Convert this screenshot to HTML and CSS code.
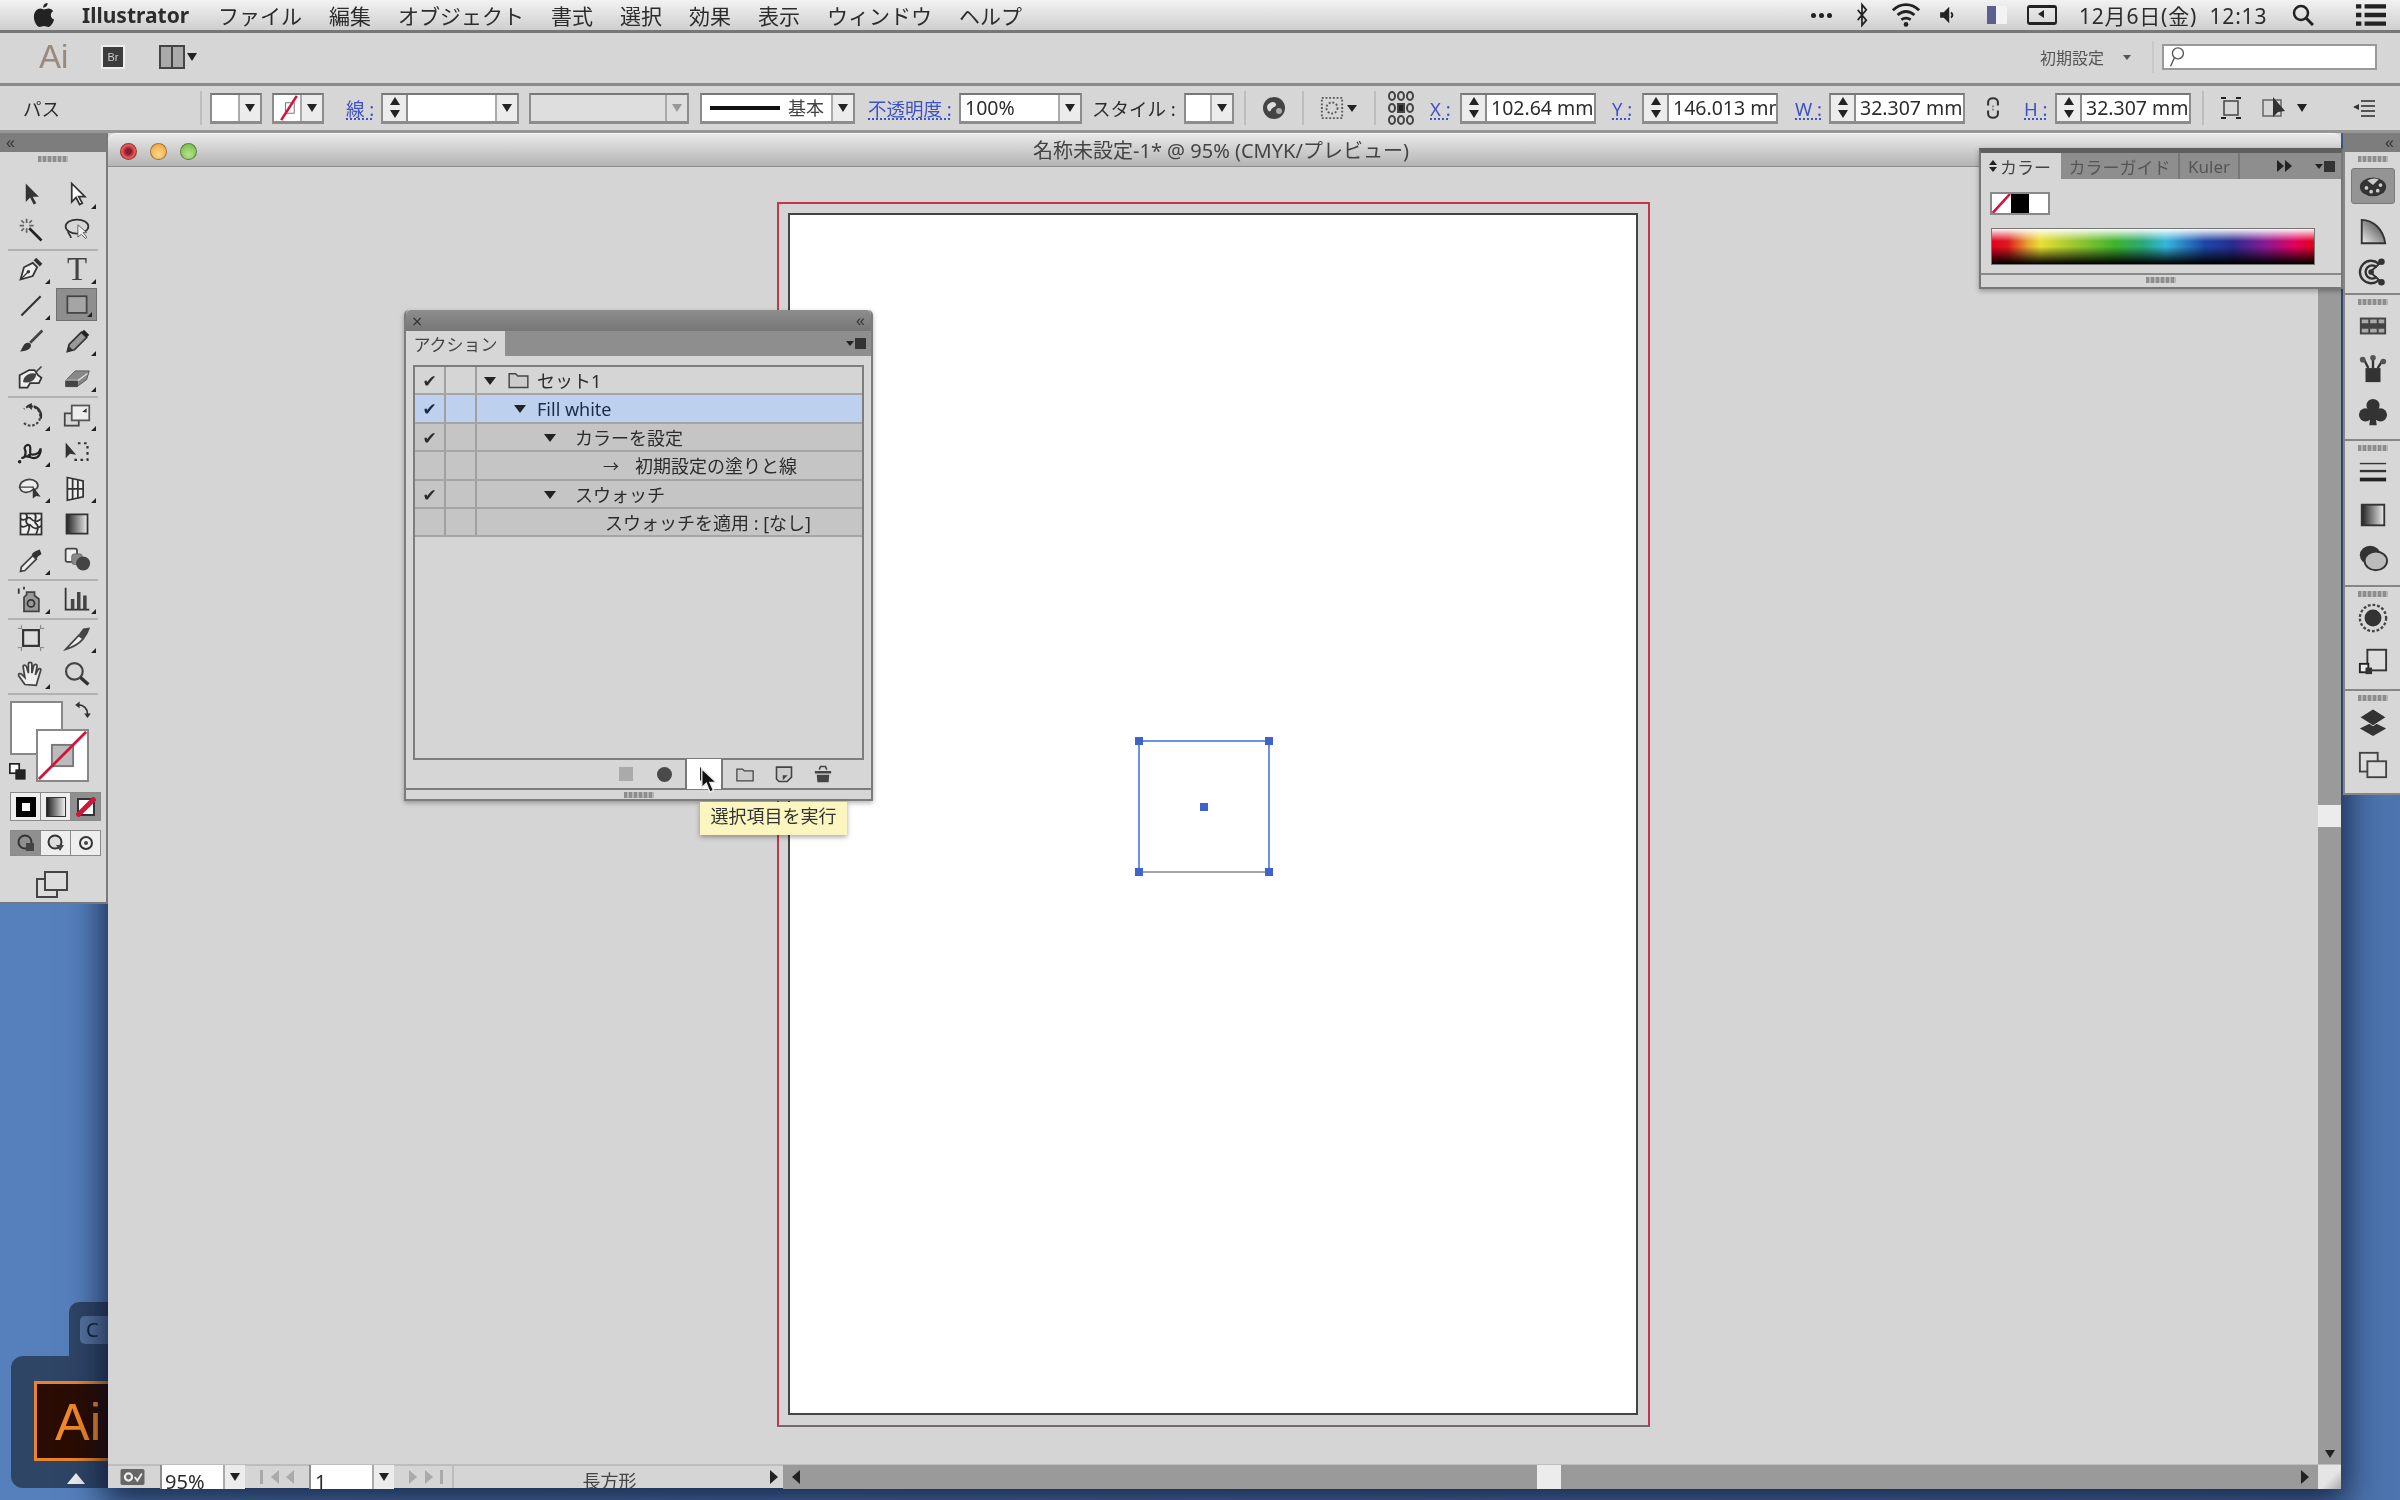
FILE: index.html
```html
<!DOCTYPE html>
<html lang="ja">
<head>
    <meta charset="UTF-8">
    <title>Illustrator</title>
    <link rel="stylesheet" href="styles.css">
</head>
<body>
<svg class="defs" width="0" height="0">
    <defs>
        <linearGradient id="grad-h"><stop offset="0" stop-color="#222"/><stop offset="1" stop-color="#eee"/></linearGradient>
        <linearGradient id="grad-d" x1="0" y1="1" x2="1" y2="0"><stop offset="0" stop-color="#eee"/><stop offset="1" stop-color="#333"/></linearGradient>
        <symbol id="i-sel" viewBox="0 0 32 32"><path d="M10 4v21l5-5 4 8 3-1.5-4-7.5h7z" fill="#333"/></symbol>
        <symbol id="i-dsel" viewBox="0 0 32 32"><path d="M10 4v21l5-5 4 8 3-1.5-4-7.5h7z" fill="#fff" stroke="#333" stroke-width="2"/></symbol>
        <symbol id="i-wand" viewBox="0 0 32 32"><path d="M14 14l14 14" stroke="#222" stroke-width="3"/><path d="M11 3v5M11 14v5M3 11h5M14 11h5M5 5l3 3M17 5l-3 3M5 17l3-3" stroke="#666" stroke-width="2"/></symbol>
        <symbol id="i-lasso" viewBox="0 0 32 32"><ellipse cx="16" cy="12" rx="13" ry="8" fill="none" stroke="#333" stroke-width="2"/><path d="M6 17c-1 4 3 4 3 8" fill="none" stroke="#333" stroke-width="2"/><path d="M17 10v14l4-3 5 5 1-2-4-5h4z" fill="#eee" stroke="#555"/></symbol>
        <symbol id="i-pen" viewBox="0 0 32 32"><path d="M4 28l4-14 10-5 5 5-5 10z" fill="#eee" stroke="#333" stroke-width="2"/><path d="M19 6l3-3 7 7-3 3z" fill="#333"/><path d="M4 28l8-8" stroke="#333" stroke-width="1.5"/><circle cx="13" cy="19" r="2" fill="#333"/></symbol>
        <symbol id="i-line" viewBox="0 0 32 32"><path d="M5 28L27 6" stroke="#333" stroke-width="2.5"/></symbol>
        <symbol id="i-rect" viewBox="0 0 32 32"><rect x="5" y="6" width="22" height="19" fill="#a5a5a5" stroke="#444" stroke-width="2"/></symbol>
        <symbol id="i-brush" viewBox="0 0 32 32"><path d="M29 4L15 18" stroke="#444" stroke-width="3"/><path d="M3 28c3-1 3-9 9-10 4 0 5 3 3 6-3 3-8 4-12 4z" fill="#333"/></symbol>
        <symbol id="i-pencil" viewBox="0 0 32 32"><path d="M5 28l2-8L21 6l6 6-14 14z" fill="#999" stroke="#333" stroke-width="2"/><path d="M21 6l3-3 6 6-3 3z" fill="#222"/><path d="M5 28l2-6 4 4z" fill="#333"/></symbol>
        <symbol id="i-blob" viewBox="0 0 32 32"><path d="M3 14l11-6h6l4 6 4 3-3 6H15l-3 5H3z" fill="#eee" stroke="#333" stroke-width="2"/><path d="M8 21c1-7 8-9 13-8-1 6-6 9-13 8zM22 10l6-6" fill="#444" stroke="#444" stroke-width="2"/></symbol>
        <symbol id="i-eraser" viewBox="0 0 32 32"><path d="M3 20L14 9h16l-3 10-11 8H3z" fill="#888" stroke="#555"/><path d="M3 20h14l11-8" fill="none" stroke="#ddd" stroke-width="1.5"/><path d="M3 20h14v7H3z" fill="#444"/></symbol>
        <symbol id="i-rotate" viewBox="0 0 32 32"><path d="M8 24a11 11 0 1 0 0-16" fill="none" stroke="#444" stroke-width="2.5" stroke-dasharray="3 2"/><path d="M19 5a11 11 0 0 1 8 14" fill="none" stroke="#333" stroke-width="2.5"/><path d="M11 4l6-3v8z" fill="#333"/></symbol>
        <symbol id="i-scale" viewBox="0 0 32 32"><rect x="2" y="13" width="16" height="14" fill="none" stroke="#444" stroke-width="2"/><rect x="10" y="4" width="20" height="17" fill="#eee" stroke="#555" stroke-width="2"/><path d="M22 11l5-4v5z" fill="#333"/></symbol>
        <symbol id="i-warp" viewBox="0 0 32 32"><path d="M5 22c4 3 6-6 4-9s5-8 6-3-2 9 3 9 8-3 9-7c1 6-3 11-8 11-4 0-8-4-10-1" fill="#ddd" stroke="#222" stroke-width="2.5"/><circle cx="3" cy="27" r="2" fill="#222"/><circle cx="14" cy="20" r="2" fill="#222"/></symbol>
        <symbol id="i-free" viewBox="0 0 32 32"><path d="M3 5v18l5-5 7 1z" fill="#333"/><path d="M17 6h11v19H10" fill="none" stroke="#333" stroke-width="2.5" stroke-dasharray="3 4"/></symbol>
        <symbol id="i-shape" viewBox="0 0 32 32"><path d="M3 15C4 6 16 4 22 9c4 5 1 9-4 9-4 4-13 5-15-3z" fill="#eee" stroke="#444" stroke-width="2"/><path d="M3 15h16" stroke="#444" stroke-width="1.5"/><path d="M18 14v14l4-3 5 1z" fill="#333"/></symbol>
        <symbol id="i-persp" viewBox="0 0 32 32"><path d="M5 4l18 4v18L5 30z" fill="#eee" stroke="#333" stroke-width="2"/><path d="M11 5v24M17 7v21M5 17h18" stroke="#333" stroke-width="2"/></symbol>
        <symbol id="i-mesh" viewBox="0 0 32 32"><rect x="4" y="4" width="24" height="24" fill="#eee" stroke="#333" stroke-width="2"/><path d="M4 10c6 5 8-5 12 0s8 3 12 0M4 18c6 5 8-5 12 0s8 3 12 0M10 4c5 6-3 8 2 12s0 8 0 12M20 4c5 6-3 8 2 12s0 8 0 12" fill="none" stroke="#333" stroke-width="2"/></symbol>
        <symbol id="i-grad" viewBox="0 0 32 32"><rect x="4" y="5" width="24" height="22" fill="url(#grad-h)" stroke="#333" stroke-width="2"/></symbol>
        <symbol id="i-drop" viewBox="0 0 32 32"><path d="M4 29l1-5L18 11l4 4L9 28z" fill="#eee" stroke="#444" stroke-width="2"/><path d="M17 10l5 5 2-3 4-3-2-5-5 2-3 2z" fill="#333"/></symbol>
        <symbol id="i-blend" viewBox="0 0 32 32"><rect x="3" y="3" width="13" height="15" rx="2" fill="#eee" stroke="#444" stroke-width="2"/><rect x="10" y="9" width="12" height="12" rx="3" fill="#888" stroke="#666"/><circle cx="23" cy="20" r="8" fill="#444"/></symbol>
        <symbol id="i-spray" viewBox="0 0 32 32"><path d="M11 8h9v4l5 4v14H8V14l3-3z" fill="#999" stroke="#444" stroke-width="2"/><circle cx="16" cy="21" r="4" fill="none" stroke="#333" stroke-width="2"/><path d="M2 4v6M8 2v3" stroke="#333" stroke-width="2"/></symbol>
        <symbol id="i-graph" viewBox="0 0 32 32"><path d="M3 3v25h27" fill="none" stroke="#333" stroke-width="2"/><path d="M9 16h4v12H9zM16 8h4v20h-4zM23 12h4v16h-4z" fill="#444"/></symbol>
        <symbol id="i-board" viewBox="0 0 32 32"><rect x="7" y="7" width="18" height="18" fill="#ddd" stroke="#333" stroke-width="2.5"/><path d="M1 5h5M26 5h5M1 27h5M26 27h5M5 1v4M27 1v4M5 27v4M27 27v4" stroke="#777"/></symbol>
        <symbol id="i-slice" viewBox="0 0 32 32"><path d="M3 29L18 13l5 4C17 24 10 27 3 29z" fill="#eee" stroke="#444" stroke-width="2"/><path d="M18 12l5-7 8-1-3 7-4 6z" fill="#444"/></symbol>
        <symbol id="i-hand" viewBox="0 0 32 32"><path d="M9 28L2 18c-1-3 2-3 4-1l3 3L7 8c0-3 3-3 4 0l2 7V5c0-3 4-3 4 0v10l2-8c1-3 4-2 4 0l-2 10 3-6c2-2 4-1 3 1l-3 10-2 7z" fill="#eee" stroke="#444" stroke-width="2"/></symbol>
        <symbol id="i-zoom" viewBox="0 0 32 32"><circle cx="13" cy="13" r="9.5" fill="none" stroke="#444" stroke-width="2.5"/><path d="M20 20l9 8" stroke="#333" stroke-width="4"/></symbol>
        <symbol id="i-swap" viewBox="0 0 32 32"><path d="M8 7c9 0 16 6 16 16" fill="none" stroke="#333" stroke-width="3"/><path d="M10 1v12L2 7zM18 22h12l-6 8z" fill="#333"/></symbol>
        <symbol id="i-screen" viewBox="0 0 32 32"><rect x="1" y="11" width="20" height="18" fill="#ddd" stroke="#444" stroke-width="2"/><rect x="9" y="4" width="22" height="18" fill="#ddd" stroke="#444" stroke-width="2"/></symbol>
        <symbol id="i-palette" viewBox="0 0 32 32"><ellipse cx="16" cy="17" rx="14" ry="10" fill="#333"/><circle cx="9" cy="18" r="2" fill="#ccc"/><circle cx="14" cy="22" r="2" fill="#ccc"/><circle cx="21" cy="21" r="2" fill="#ccc"/><circle cx="24" cy="15" r="2" fill="#ccc"/><path d="M10 10c4-2 8-3 12-1l-6 6z" fill="#ccc"/></symbol>
        <symbol id="i-guide" viewBox="0 0 32 32"><path d="M4 3c12 0 23 10 25 25H4z" fill="url(#grad-d)" stroke="#333" stroke-width="2"/></symbol>
        <symbol id="i-kuler" viewBox="0 0 32 32"><path d="M22 7A12 12 0 1 0 22 25" fill="none" stroke="#333" stroke-width="2.5"/><path d="M20 11a7 7 0 1 0 0 10" fill="none" stroke="#333" stroke-width="2.5"/><path d="M13 16L25 5M13 16l12 11" stroke="#333" stroke-width="2"/><circle cx="25" cy="5" r="3.5" fill="#333"/><circle cx="25" cy="27" r="3.5" fill="#333"/><circle cx="14" cy="16" r="3" fill="#333"/></symbol>
        <symbol id="i-swatches" viewBox="0 0 32 32"><rect x="2" y="7" width="28" height="18" fill="#444"/><path d="M4 13h7v-4H4zM13 13h7V9h-7zM22 13h6V9h-6zM4 23h7v-4H4zM13 23h7v-4h-7zM22 23h6v-4h-6z" fill="#aaa"/></symbol>
        <symbol id="i-brushes" viewBox="0 0 32 32"><path d="M8 15h16v15H8z" fill="#333"/><path d="M11 15L6 5M16 15V3M21 15l5-8" stroke="#333" stroke-width="2.5"/><circle cx="5" cy="6" r="3" fill="#555"/><circle cx="16" cy="4" r="3" fill="#555"/><circle cx="27" cy="8" r="3" fill="#555"/></symbol>
        <symbol id="i-club" viewBox="0 0 32 32"><circle cx="16" cy="9" r="7" fill="#333"/><circle cx="8" cy="19" r="7" fill="#333"/><circle cx="24" cy="19" r="7" fill="#333"/><path d="M14 15h4l2 15h-8z" fill="#333"/></symbol>
        <symbol id="i-stroke" viewBox="0 0 32 32"><path d="M2 7h28" stroke="#333" stroke-width="1.5"/><path d="M2 15h28" stroke="#333" stroke-width="2.5"/><path d="M2 24h28" stroke="#222" stroke-width="4"/></symbol>
        <symbol id="i-opacity" viewBox="0 0 32 32"><ellipse cx="13" cy="13" rx="11" ry="10" fill="#333"/><ellipse cx="19" cy="19" rx="12" ry="10" fill="#bbb" stroke="#333" stroke-width="2"/></symbol>
        <symbol id="i-appear" viewBox="0 0 32 32"><circle cx="16" cy="16" r="14" fill="none" stroke="#444" stroke-width="2.5" stroke-dasharray="3 2"/><circle cx="16" cy="16" r="9" fill="#333"/></symbol>
        <symbol id="i-gstyle" viewBox="0 0 32 32"><rect x="10" y="4" width="20" height="22" fill="#ddd" stroke="#333" stroke-width="2"/><rect x="2" y="19" width="9" height="9" fill="#eee" stroke="#222" stroke-width="2"/><rect x="8" y="23" width="7" height="7" fill="#333"/></symbol>
        <symbol id="i-layers" viewBox="0 0 32 32"><path d="M16 16L2 23l14 8 14-8z" fill="#333"/><path d="M16 2L2 11l14 9 14-9z" fill="#333" stroke="#ddd"/></symbol>
        <symbol id="i-artboards" viewBox="0 0 32 32"><rect x="2" y="3" width="19" height="20" fill="#ddd" stroke="#444" stroke-width="2"/><rect x="10" y="12" width="20" height="17" fill="#ddd" stroke="#444" stroke-width="2"/></symbol>
        <symbol id="i-folder" viewBox="0 0 32 32"><path d="M3 8h9l3 3h14v16H3z" fill="#ccc" stroke="#444" stroke-width="2"/></symbol>
        <symbol id="i-new" viewBox="0 0 32 32"><path d="M4 5h24v16l-7 7H8l-4-4z" fill="#ccc" stroke="#444" stroke-width="2.5"/><path d="M14 18h8l-8 8z" fill="#444"/></symbol>
        <symbol id="i-trash" viewBox="0 0 32 32"><path d="M3 11h26v4H3zM6 17h20l-1 12H7z" fill="#444"/><path d="M10 9l2-5h8l2 5" fill="none" stroke="#444" stroke-width="2.5"/></symbol>
        <symbol id="i-wifi" viewBox="0 0 32 32"><path d="M2 11c8-8 20-8 28 0M7 16c6-5 12-5 18 0M11 21c3-2 7-2 10 0" fill="none" stroke="#222" stroke-width="3"/><circle cx="16" cy="26" r="2.5" fill="#222"/></symbol>
    </defs>
</svg>

<div class="screen">
    <header class="menubar">
        <svg class="apple" viewBox="0 0 24 28"><path d="M17 7c2 0 4 1 5 3-4 2-3 8 1 9-1 4-4 8-6 8s-3-1-5-1-3 1-5 1C4 27 1 21 1 16 1 10 5 7 8 7c2 0 3 1 4 1s3-1 5-1zM16 1c0 3-2 5-5 5 0-3 2-5 5-5z"/></svg>
        <span class="menubar__app">Illustrator</span>
        <span class="menubar__item">ファイル</span>
        <span class="menubar__item">編集</span>
        <span class="menubar__item">オブジェクト</span>
        <span class="menubar__item">書式</span>
        <span class="menubar__item">選択</span>
        <span class="menubar__item">効果</span>
        <span class="menubar__item">表示</span>
        <span class="menubar__item">ウィンドウ</span>
        <span class="menubar__item">ヘルプ</span>
        <div class="menubar__status">
            <span class="status-dots"><i></i><i></i><i></i></span>
            <svg class="status-bt" viewBox="0 0 14 28"><path d="M2 8l10 12-5 6V2l5 6L2 20" fill="none" stroke="#222" stroke-width="2"/></svg>
            <svg class="status-wifi"><use href="#i-wifi"/></svg>
            <svg class="status-vol" viewBox="0 0 16 22"><path d="M1 8h4l6-6v18l-6-6H1z" fill="#222"/><path d="M13 8c2 2 2 4 0 6" fill="none" stroke="#222" stroke-width="2"/></svg>
            <span class="status-flag"></span>
            <span class="status-bat"><i></i></span>
            <span class="status-clock">12月6日(金)&nbsp; 12:13</span>
            <svg class="status-search" viewBox="0 0 22 22"><circle cx="9" cy="9" r="7" fill="none" stroke="#222" stroke-width="2.5"/><path d="M14 14l7 7" stroke="#222" stroke-width="3"/></svg>
            <svg class="status-list" viewBox="0 0 28 22"><path d="M0 3h5M8 3h20M0 11h5M8 11h20M0 19h5M8 19h20" stroke="#222" stroke-width="4"/></svg>
        </div>
    </header>

    <div class="appbar">
        <span class="appbar__logo">Ai</span>
        <span class="appbar__br">Br</span>
        <span class="appbar__layout"><i></i><i></i></span>
        <span class="tri tri--down appbar__caret"></span>
        <span class="appbar__workspace">初期設定</span>
        <span class="tri tri--down tri--small appbar__wscaret"></span>
        <span class="appbar__sep"></span>
        <div class="appbar__search">
            <svg viewBox="0 0 18 24"><circle cx="10" cy="8" r="6" fill="none" stroke="#555" stroke-width="1.5"/><path d="M6 13L2 22" stroke="#555" stroke-width="1.5"/></svg>
        </div>
    </div>

    <div class="controlbar">
        <span class="ctl-label ctl-path">パス</span>
        <span class="ctl-sep ctl-sep--first"></span>
        <div class="field ctl-fill"><span class="field__value"></span><span class="field__arrow"><span class="tri tri--down"></span></span></div>
        <div class="field ctl-stroke">
            <span class="field__value"><svg class="none-mark" viewBox="0 0 24 30"><rect x="8" y="9" width="10" height="12" fill="none" stroke="#666"/><path d="M3 29L21 1" stroke="#d0143c" stroke-width="3"/></svg></span>
            <span class="field__arrow"><span class="tri tri--down"></span></span>
        </div>
        <span class="ctl-link ctl-weightlabel">線 :</span>
        <div class="field ctl-weight">
            <span class="stepper"><span class="tri tri--up"></span><span class="tri tri--down"></span></span>
            <span class="field__value"></span><span class="field__arrow"><span class="tri tri--down"></span></span>
        </div>
        <div class="field field--off ctl-profile"><span class="field__value"></span><span class="field__arrow"><span class="tri tri--down tri--pale"></span></span></div>
        <div class="field ctl-line">
            <span class="field__value"><i class="line-sample"></i>基本</span>
            <span class="field__arrow"><span class="tri tri--down"></span></span>
        </div>
        <span class="ctl-link ctl-opacitylabel">不透明度 :</span>
        <div class="field ctl-opacity"><span class="field__value">100%</span><span class="field__arrow"><span class="tri tri--down"></span></span></div>
        <span class="ctl-label ctl-stylelabel">スタイル :</span>
        <div class="field ctl-style"><span class="field__value"></span><span class="field__arrow"><span class="tri tri--down"></span></span></div>
        <span class="ctl-sep ctl-sep--a"></span>
        <svg class="ctl-globe" viewBox="0 0 24 24"><circle cx="12" cy="12" r="11" fill="#444"/><path d="M5 10c3-5 8-5 9-2s-4 3-5 6-4 1-4-4z" fill="#ddd"/><circle cx="17" cy="15" r="3" fill="#aaa"/></svg>
        <span class="ctl-sep ctl-sep--b"></span>
        <svg class="ctl-align" viewBox="0 0 26 26"><rect x="2" y="2" width="22" height="22" fill="none" stroke="#555" stroke-width="2" stroke-dasharray="2 2"/><circle cx="13" cy="13" r="6" fill="none" stroke="#555" stroke-width="2" stroke-dasharray="2 2"/></svg>
        <span class="tri tri--down ctl-aligncaret"></span>
        <span class="ctl-sep ctl-sep--c"></span>
        <span class="refpoint"><i></i><i></i><i></i><i></i><i class="refpoint__on"></i><i></i><i></i><i></i><i></i></span>
        <span class="ctl-link ctl-xlabel">X :</span>
        <div class="field ctl-num ctl-num--x"><span class="stepper"><span class="tri tri--up"></span><span class="tri tri--down"></span></span><span class="field__value">102.64 mm</span></div>
        <span class="ctl-link ctl-ylabel">Y :</span>
        <div class="field ctl-num ctl-num--y"><span class="stepper"><span class="tri tri--up"></span><span class="tri tri--down"></span></span><span class="field__value">146.013 mm</span></div>
        <span class="ctl-link ctl-wlabel">W :</span>
        <div class="field ctl-num ctl-num--w"><span class="stepper"><span class="tri tri--up"></span><span class="tri tri--down"></span></span><span class="field__value">32.307 mm</span></div>
        <svg class="ctl-chain" viewBox="0 0 22 26"><path d="M5 10V6a6 5 0 0 1 12 0v4M5 16v4a6 5 0 0 0 12 0v-4" fill="none" stroke="#333" stroke-width="2.5"/><path d="M11 10v6" stroke="#777" stroke-width="2" stroke-dasharray="2 2"/></svg>
        <span class="ctl-link ctl-hlabel">H :</span>
        <div class="field ctl-num ctl-num--h"><span class="stepper"><span class="tri tri--up"></span><span class="tri tri--down"></span></span><span class="field__value">32.307 mm</span></div>
        <span class="ctl-sep ctl-sep--d"></span>
        <svg class="ctl-isolate" viewBox="0 0 22 22"><rect x="4" y="4" width="14" height="14" fill="none" stroke="#444" stroke-width="1.5"/><path d="M1 1h5M16 1h5M1 21h5M16 21h5" stroke="#222" stroke-width="2"/></svg>
        <svg class="ctl-mask" viewBox="0 0 26 26"><rect x="1" y="5" width="18" height="16" fill="none" stroke="#666" stroke-width="1.5"/><path d="M11 2v20l5-5 7-1z" fill="#333"/></svg>
        <span class="tri tri--down ctl-maskcaret"></span>
        <svg class="ctl-menu" viewBox="0 0 24 24"><path d="M9 5h14M9 10h14M9 15h14M9 20h14" stroke="#555" stroke-width="2"/><path d="M7 8v6l-6-3z" fill="#333"/></svg>
    </div>

    <main class="desktop">
        <div class="appdock">
            <div class="appdock__tab"><span class="appdock__chip">C</span></div>
            <div class="appdock__main">
                <span class="appdock__ai">Ai</span>
            </div>
            <span class="appdock__pointer"></span>
        </div>

        <section class="docwin">
            <div class="docwin__title">
                <span class="light light--red"></span>
                <span class="light light--yellow"></span>
                <span class="light light--green"></span>
                <span class="docwin__name">名称未設定-1* @ 95% (CMYK/プレビュー)</span>
            </div>
            <div class="docwin__body">
                <div class="canvas">
                    <div class="bleed"></div>
                    <div class="artboard"></div>
                    <div class="selection">
                        <i class="handle handle--tl"></i><i class="handle handle--tr"></i>
                        <i class="handle handle--bl"></i><i class="handle handle--br"></i>
                        <i class="handle handle--c"></i>
                    </div>
                </div>
                <div class="vscroll">
                    <span class="vscroll__thumb"></span>
                    <span class="tri tri--down vscroll__arrow"></span>
                </div>
            </div>
            <div class="docwin__status">
                <svg class="docmode" viewBox="0 0 27 18"><rect width="27" height="18" rx="2" fill="#666"/><circle cx="9" cy="9" r="4" fill="none" stroke="#eee" stroke-width="2.5"/><path d="M16 9l3 4 5-8" fill="none" stroke="#eee" stroke-width="2"/></svg>
                <div class="zoomfield"><span class="zoomfield__value">95%</span><span class="field__arrow"><span class="tri tri--down"></span></span></div>
                <span class="pager pager--prev"><i class="tri tri--left tri--pale"></i><i class="tri tri--left tri--pale"></i></span>
                <div class="zoomfield zoomfield--page"><span class="zoomfield__value">1</span><span class="field__arrow"><span class="tri tri--down"></span></span></div>
                <span class="pager pager--next"><i class="tri tri--right tri--pale"></i><i class="tri tri--right tri--pale"></i></span>
                <span class="docinfo">長方形</span>
                <span class="tri tri--right docinfo__arrow"></span>
                <div class="hscroll">
                    <span class="tri tri--left"></span>
                    <span class="hscroll__thumb"></span>
                    <span class="tri tri--right"></span>
                </div>
                <span class="resizer"></span>
            </div>
        </section>

        <aside class="toolbox">
            <div class="panel-top"><span class="collapse">&#171;</span></div>
            <div class="grip"></div>
            <div class="tools">
                <span class="tool"><svg><use href="#i-sel"/></svg></span>
                <span class="tool tool--more"><svg><use href="#i-dsel"/></svg></span>
                <span class="tool"><svg><use href="#i-wand"/></svg></span>
                <span class="tool"><svg><use href="#i-lasso"/></svg></span>
            </div>
            <div class="tools">
                <span class="tool tool--more"><svg><use href="#i-pen"/></svg></span>
                <span class="tool tool--more tool--type">T</span>
                <span class="tool tool--more"><svg><use href="#i-line"/></svg></span>
                <span class="tool tool--more tool--active"><svg><use href="#i-rect"/></svg></span>
                <span class="tool"><svg><use href="#i-brush"/></svg></span>
                <span class="tool tool--more"><svg><use href="#i-pencil"/></svg></span>
                <span class="tool"><svg><use href="#i-blob"/></svg></span>
                <span class="tool tool--more"><svg><use href="#i-eraser"/></svg></span>
            </div>
            <div class="tools">
                <span class="tool tool--more"><svg><use href="#i-rotate"/></svg></span>
                <span class="tool tool--more"><svg><use href="#i-scale"/></svg></span>
                <span class="tool tool--more"><svg><use href="#i-warp"/></svg></span>
                <span class="tool"><svg><use href="#i-free"/></svg></span>
                <span class="tool tool--more"><svg><use href="#i-shape"/></svg></span>
                <span class="tool tool--more"><svg><use href="#i-persp"/></svg></span>
                <span class="tool"><svg><use href="#i-mesh"/></svg></span>
                <span class="tool"><svg><use href="#i-grad"/></svg></span>
                <span class="tool tool--more"><svg><use href="#i-drop"/></svg></span>
                <span class="tool"><svg><use href="#i-blend"/></svg></span>
            </div>
            <div class="tools">
                <span class="tool tool--more"><svg><use href="#i-spray"/></svg></span>
                <span class="tool tool--more"><svg><use href="#i-graph"/></svg></span>
            </div>
            <div class="tools">
                <span class="tool"><svg><use href="#i-board"/></svg></span>
                <span class="tool tool--more"><svg><use href="#i-slice"/></svg></span>
                <span class="tool tool--more"><svg><use href="#i-hand"/></svg></span>
                <span class="tool"><svg><use href="#i-zoom"/></svg></span>
            </div>
            <div class="colors">
                <span class="colors__fill"></span>
                <span class="colors__stroke">
                    <svg viewBox="0 0 53 53"><rect x="15" y="15" width="23" height="23" fill="#bbb" stroke="#777" stroke-width="2"/><path d="M1 52L52 1" stroke="#d0143c" stroke-width="3"/></svg>
                </span>
                <svg class="colors__swap"><use href="#i-swap"/></svg>
                <svg class="colors__reset" viewBox="0 0 20 20"><rect x="1" y="1" width="11" height="11" fill="#fff" stroke="#222" stroke-width="2"/><rect x="8" y="8" width="11" height="11" fill="#222" stroke="#222"/></svg>
            </div>
            <div class="btnrow">
                <span class="btnrow__btn"><i class="mode-color"></i></span>
                <span class="btnrow__btn"><i class="mode-grad"></i></span>
                <span class="btnrow__btn btnrow__btn--on"><svg viewBox="0 0 20 20"><rect x="2" y="2" width="16" height="16" fill="#fff" stroke="#333" stroke-width="2"/><path d="M1 19L19 1" stroke="#d0143c" stroke-width="5"/></svg></span>
            </div>
            <div class="btnrow btnrow--draw">
                <span class="btnrow__btn btnrow__btn--on"><svg viewBox="0 0 20 20"><circle cx="9" cy="9" r="6.5" fill="none" stroke="#333" stroke-width="2"/><rect x="10" y="10" width="8" height="8" fill="#444"/></svg></span>
                <span class="btnrow__btn"><svg viewBox="0 0 20 20"><circle cx="9" cy="9" r="6.5" fill="#ddd" stroke="#333" stroke-width="2"/><path d="M10 12h8l-4 6z" fill="#444"/></svg></span>
                <span class="btnrow__btn"><svg viewBox="0 0 20 20"><circle cx="10" cy="10" r="6" fill="none" stroke="#333" stroke-width="2"/><circle cx="10" cy="10" r="2" fill="#444"/></svg></span>
            </div>
            <svg class="screenmode"><use href="#i-screen"/></svg>
        </aside>

        <section class="actions">
            <div class="panel-head">
                <span class="panel-head__close">&#215;</span>
                <span class="collapse">&#171;</span>
            </div>
            <div class="tabs">
                <span class="tab tab--on tab--actions">アクション</span>
                <span class="panel-menu"><span class="tri tri--down tri--small"></span><i></i></span>
            </div>
            <div class="actions__list">
                <div class="row">
                    <span class="row__check">&#10004;</span><span class="row__dialog"></span>
                    <span class="row__body row__body--set"><span class="tri tri--down row__tri"></span><svg class="row__folder"><use href="#i-folder"/></svg>セット1</span>
                </div>
                <div class="row row--blue">
                    <span class="row__check">&#10004;</span><span class="row__dialog"></span>
                    <span class="row__body row__body--action"><span class="tri tri--down row__tri"></span>Fill white</span>
                </div>
                <div class="row row--step">
                    <span class="row__check">&#10004;</span><span class="row__dialog"></span>
                    <span class="row__body row__body--step"><span class="tri tri--down row__tri"></span>カラーを設定</span>
                </div>
                <div class="row row--step">
                    <span class="row__check"></span><span class="row__dialog"></span>
                    <span class="row__body row__body--leaf"><span class="row__arrow">&#8594;</span>初期設定の塗りと線</span>
                </div>
                <div class="row row--step">
                    <span class="row__check">&#10004;</span><span class="row__dialog"></span>
                    <span class="row__body row__body--step"><span class="tri tri--down row__tri"></span>スウォッチ</span>
                </div>
                <div class="row row--step">
                    <span class="row__check"></span><span class="row__dialog"></span>
                    <span class="row__body row__body--apply">スウォッチを適用 : [なし]</span>
                </div>
            </div>
            <div class="actions__foot">
                <i class="foot-stop"></i>
                <i class="foot-rec"></i>
                <span class="foot-play"><i class="tri tri--right"></i></span>
                <svg class="foot-icon foot-icon--first"><use href="#i-folder"/></svg>
                <svg class="foot-icon"><use href="#i-new"/></svg>
                <svg class="foot-icon"><use href="#i-trash"/></svg>
            </div>
            <div class="grip grip--foot"></div>
        </section>
        <div class="tooltip">選択項目を実行</div>
        <svg class="cursor" viewBox="0 0 22 30"><path d="M3 2v21l5-5 4 10 4-2-4-9h7z" fill="#111" stroke="#eee" stroke-width="1.5"/></svg>

        <section class="colorpanel">
            <div class="tabs tabs--color">
                <span class="tab tab--on tab--color"><span class="updown"><i class="tri tri--up tri--small"></i><i class="tri tri--down tri--small"></i></span>カラー</span>
                <span class="tab tab--guide">カラーガイド</span>
                <span class="tab tab--kuler">Kuler</span>
                <span class="tabs__more"><i class="tri tri--right"></i><i class="tri tri--right"></i></span>
                <span class="panel-menu panel-menu--color"><span class="tri tri--down tri--small"></span><i></i></span>
            </div>
            <div class="colorpanel__body">
                <div class="chips">
                    <span class="chip chip--none"><svg viewBox="0 0 20 22"><path d="M0 22L20 0" stroke="#d0143c" stroke-width="3"/></svg></span>
                    <span class="chip chip--black"></span>
                    <span class="chip"></span>
                </div>
                <div class="spectrum"></div>
            </div>
            <div class="grip grip--foot"></div>
        </section>

        <aside class="paneldock">
            <div class="panel-top"><span class="collapse">&#171;</span></div>
            <div class="dockgroup dockgroup--first">
                <div class="grip"></div>
                <span class="dockicon dockicon--on"><svg><use href="#i-palette"/></svg></span>
                <span class="dockicon dockicon--guide"><svg><use href="#i-guide"/></svg></span>
                <span class="dockicon dockicon--kuler"><svg><use href="#i-kuler"/></svg></span>
            </div>
            <div class="dockgroup dockgroup--tri">
                <div class="grip"></div>
                <span class="dockicon"><svg><use href="#i-swatches"/></svg></span>
                <span class="dockicon"><svg><use href="#i-brushes"/></svg></span>
                <span class="dockicon"><svg><use href="#i-club"/></svg></span>
            </div>
            <div class="dockgroup dockgroup--tri">
                <div class="grip"></div>
                <span class="dockicon"><svg><use href="#i-stroke"/></svg></span>
                <span class="dockicon"><svg><use href="#i-grad"/></svg></span>
                <span class="dockicon"><svg><use href="#i-opacity"/></svg></span>
            </div>
            <div class="dockgroup dockgroup--duo">
                <div class="grip"></div>
                <span class="dockicon"><svg><use href="#i-appear"/></svg></span>
                <span class="dockicon"><svg><use href="#i-gstyle"/></svg></span>
            </div>
            <div class="dockgroup dockgroup--duo">
                <div class="grip"></div>
                <span class="dockicon"><svg><use href="#i-layers"/></svg></span>
                <span class="dockicon"><svg><use href="#i-artboards"/></svg></span>
            </div>
        </aside>
    </main>
</div>
</body>
</html>
```

FILE: styles.css
```css
* {
    box-sizing: border-box;
}
html, body {
    margin: 0;
    height: 100%;
    overflow: hidden;
}
body {
    font-family: "Noto Sans", "Noto Sans CJK JP", sans-serif;
    color: #2c2c2c;
    background: #4f78b5;
}
i {
    display: block;
    font-style: normal;
}
.defs {
    position: absolute;
}
.screen {
    display: flex;
    flex-direction: column;
    height: 1500px;
    filter: blur(.7px);
}

/* triangles used all over the ui */
.tri {
    display: inline-block;
    width: 0;
    height: 0;
    border-style: solid;
    border-color: transparent;
    flex: none;
}
.tri--down {
    border-width: 8px 5px 0;
    border-top-color: #222;
}
.tri--up {
    border-width: 0 5px 8px;
    border-bottom-color: #222;
}
.tri--left {
    border-width: 7px 8px 7px 0;
    border-right-color: #222;
}
.tri--right {
    border-width: 7px 0 7px 8px;
    border-left-color: #222;
}
.tri--small {
    border-width: 5px 4px 0;
}
.tri--small.tri--up {
    border-width: 0 4px 5px;
}
.tri--down.tri--pale {
    border-top-color: #999;
}
.tri--left.tri--pale {
    border-right-color: #aaa;
}
.tri--right.tri--pale {
    border-left-color: #aaa;
}

/* menu bar */
.menubar {
    display: flex;
    align-items: center;
    height: 33px;
    padding-left: 33px;
    font-size: 21px;
    background: linear-gradient(#f2f2f2, #cfcfcf);
    border-bottom: 3px solid #777;
}
.apple {
    width: 22px;
    height: 28px;
    fill: #222;
    margin-right: 27px;
}
.menubar__app {
    font-weight: 700;
    width: 136px;
}
.menubar__item {
    margin-right: 27px;
}
.menubar__status {
    display: flex;
    align-items: center;
    margin-left: auto;
    height: 30px;
}
.status-dots {
    display: flex;
    gap: 3px;
    margin-right: 24px;
}
.status-dots i {
    width: 5px;
    height: 5px;
    border-radius: 50%;
    background: #222;
}
.status-bt {
    width: 12px;
    height: 26px;
    margin-right: 22px;
}
.status-wifi {
    width: 32px;
    height: 30px;
    margin-right: 17px;
}
.status-vol {
    width: 15px;
    height: 20px;
    margin-right: 33px;
}
.status-flag {
    width: 20px;
    height: 18px;
    background: linear-gradient(90deg, #5a5f90 45%, #f3f3f3 45%);
    margin-right: 20px;
}
.status-bat {
    width: 30px;
    height: 20px;
    border: 2px solid #222;
    border-top-width: 3px;
    border-bottom-width: 3px;
    border-radius: 3px;
    margin-right: 22px;
    padding: 2px 9px;
}
.status-bat i {
    width: 0;
    height: 0;
    border: 4px solid transparent;
    border-right: 6px solid #222;
    border-left: 0;
}
.status-clock {
    width: 213px;
    white-space: nowrap;
    font-size: 21px;
    letter-spacing: .8px;
}
.status-search {
    width: 22px;
    height: 22px;
    margin-right: 42px;
}
.status-list {
    width: 30px;
    height: 24px;
    margin-right: 14px;
}

/* application bar */
.appbar {
    display: flex;
    align-items: center;
    height: 53px;
    padding-bottom: 2px;
    background: #d6d6d6;
    border-bottom: 3px solid #8a8a8a;
}
.appbar__logo {
    width: 61px;
    padding-left: 39px;
    font-family: "Liberation Sans", sans-serif;
    font-size: 33px;
    color: #9a8a7c;
    flex: none;
    white-space: nowrap;
    margin-right: 40px;
}
.appbar__br {
    width: 24px;
    height: 24px;
    background: #3c3c3c;
    border: 2px solid #eee;
    color: #ccc;
    font: 11px "Liberation Sans", sans-serif;
    line-height: 20px;
    text-align: center;
}
.appbar__layout {
    display: flex;
    gap: 2px;
    width: 26px;
    height: 24px;
    margin-left: 34px;
    padding: 2px;
    background: #444;
}
.appbar__layout i {
    flex: 1;
    background: #aaa;
}
.appbar__caret {
    margin-left: 2px;
}
.appbar__workspace {
    margin-left: auto;
    font-size: 16px;
    color: #555;
    white-space: nowrap;
}
.appbar__wscaret {
    margin-left: 19px;
    border-top-color: #555;
}
.appbar__sep {
    width: 2px;
    height: 32px;
    margin-left: 21px;
    background: #c9c9c9;
}
.appbar__search {
    width: 215px;
    height: 26px;
    margin: 0 23px 0 8px;
    padding-left: 4px;
    background: #fff;
    border: 2px solid #999;
}
.appbar__search svg {
    display: block;
    width: 18px;
    height: 22px;
}

/* control bar */
.controlbar {
    display: flex;
    align-items: center;
    height: 47px;
    font-size: 18.5px;
    background: #d6d6d6;
    border-bottom: 3px solid #969696;
}
.ctl-label {
    white-space: nowrap;
    flex: none;
}
.ctl-link {
    white-space: nowrap;
    flex: none;
    color: #3d52c8;
    text-decoration: underline dotted #3d52c8;
    text-underline-offset: 3px;
}
.ctl-path {
    width: 177px;
    margin-left: 23px;
}
.ctl-sep {
    width: 2px;
    height: 34px;
    flex: none;
    background: #bdbdbd;
}
.field {
    display: flex;
    flex: none;
    height: 31px;
    font-size: 19.5px;
    background: #fff;
    border: 2px solid #8c8c8c;
    border-top-color: #777;
    border-bottom-width: 3px;
    overflow: hidden;
}
.field--off,
.field--off .field__arrow {
    background: #dedede;
}
.field__value {
    display: flex;
    align-items: center;
    flex: 1;
    min-width: 0;
    padding-left: 4px;
    line-height: 26px;
    white-space: nowrap;
    overflow: hidden;
}
.field__arrow {
    display: flex;
    align-items: center;
    justify-content: center;
    width: 22px;
    flex: none;
    background: #ececec;
    border-left: 2px solid #aaa;
}
.stepper {
    display: flex;
    flex-direction: column;
    align-items: center;
    justify-content: space-around;
    width: 25px;
    flex: none;
    background: #ececec;
    border-right: 2px solid #8c8c8c;
}
.ctl-fill {
    width: 52px;
    margin-left: 8px;
}
.ctl-stroke {
    width: 52px;
    margin-left: 10px;
}
.none-mark {
    width: 22px;
    height: 26px;
}
.ctl-weightlabel {
    width: 26px;
    margin-left: 22px;
}
.ctl-weight {
    width: 138px;
    margin-left: 9px;
}
.ctl-profile {
    width: 160px;
    margin-left: 10px;
}
.ctl-line {
    width: 155px;
    margin-left: 11px;
}
.ctl-line .field__value {
    padding-left: 8px;
    font-size: 18px;
    color: #444;
}
.line-sample {
    width: 70px;
    height: 4px;
    margin-right: 8px;
    background: #111;
}
.ctl-opacitylabel {
    width: 83px;
    margin-left: 13px;
}
.ctl-opacity {
    width: 123px;
    margin-left: 8px;
}
.ctl-stylelabel {
    width: 82px;
    margin-left: 10px;
}
.ctl-style {
    width: 50px;
    margin-left: 10px;
}
.ctl-sep--a {
    margin-left: 10px;
}
.ctl-globe {
    width: 24px;
    height: 24px;
    flex: none;
    margin-left: 16px;
}
.ctl-sep--b {
    margin-left: 16px;
}
.ctl-align {
    width: 24px;
    height: 24px;
    flex: none;
    margin-left: 16px;
}
.ctl-aligncaret {
    margin-left: 3px;
    border-width: 7px 5px 0;
}
.ctl-sep--c {
    margin-left: 17px;
}
.refpoint {
    display: grid;
    grid-template-columns: repeat(3, 8px);
    grid-auto-rows: 10px;
    gap: 2px 1px;
    margin-left: 12px;
    flex: none;
}
.refpoint i {
    border: 2px solid #444;
    border-radius: 50%;
}
.refpoint .refpoint__on {
    background: #222;
    border-radius: 0;
}
.ctl-xlabel {
    width: 22px;
    margin-left: 16px;
}
.ctl-num {
    width: 136px;
}
.ctl-num--x {
    margin-left: 8px;
}
.ctl-ylabel {
    width: 22px;
    margin-left: 16px;
}
.ctl-num--y {
    margin-left: 8px;
}
.ctl-wlabel {
    width: 26px;
    margin-left: 17px;
}
.ctl-num--w {
    margin-left: 8px;
}
.ctl-chain {
    width: 18px;
    height: 22px;
    flex: none;
    margin-left: 19px;
    margin-right: 2px;
}
.ctl-hlabel {
    width: 24px;
    margin-left: 20px;
}
.ctl-num--h {
    margin-left: 7px;
}
.ctl-sep--d {
    margin-left: 11px;
}
.ctl-isolate {
    width: 22px;
    height: 22px;
    flex: none;
    margin-left: 16px;
}
.ctl-mask {
    width: 26px;
    height: 26px;
    flex: none;
    margin-left: 20px;
}
.ctl-maskcaret {
    margin-left: 9px;
}
.ctl-menu {
    width: 24px;
    height: 24px;
    flex: none;
    margin-left: 45px;
}

/* everything below the bars sits on the desktop */
.desktop {
    position: relative;
    flex: 1;
    overflow: hidden;
    background: linear-gradient(90deg, #5580bc, #4d74ae);
}
.appdock {
    position: absolute;
    left: 11px;
    top: 1169px;
    width: 140px;
    height: 186px;
}
.appdock__tab {
    position: absolute;
    left: 58px;
    top: 0;
    width: 80px;
    height: 60px;
    padding: 14px 0 0 11px;
    border-radius: 10px 0 0 0;
    background: #2f4566;
}
.appdock__chip {
    display: block;
    width: 60px;
    height: 28px;
    padding-left: 6px;
    border-radius: 5px;
    background: #56739f;
    font-size: 20px;
    line-height: 28px;
    color: #0d2340;
}
.appdock__main {
    position: absolute;
    left: 0;
    top: 54px;
    width: 140px;
    height: 132px;
    padding: 25px 0 0 23px;
    border-radius: 12px 0 0 12px;
    background: #2f4566;
}
.appdock__ai {
    display: block;
    width: 110px;
    height: 80px;
    padding-left: 18px;
    font-family: "Liberation Sans", sans-serif;
    font-size: 52px;
    line-height: 76px;
    color: #f08a2a;
    background: #2a0c02;
    border: 3px solid #e8852c;
}
.appdock__pointer {
    position: absolute;
    left: 56px;
    top: 171px;
    width: 0;
    height: 0;
    border: 9px solid transparent;
    border-top: 0;
    border-bottom: 11px solid #eee;
}
.docwin {
    position: absolute;
    left: 108px;
    top: 0;
    width: 2233px;
    height: 1355px;
    display: flex;
    flex-direction: column;
    background: #d5d5d5;
    box-shadow: 0 10px 32px 6px rgba(5, 15, 40, .75);
}
.docwin__title {
    display: flex;
    align-items: center;
    position: relative;
    height: 34px;
    flex: none;
    padding: 2px 0 0 12px;
    gap: 13px;
    background: linear-gradient(#e9e9e9, #b4b4b4);
    border-top: 1px solid #f6f6f6;
    border-bottom: 1px solid #8d8d8d;
    border-radius: 8px 8px 0 0;
}
.light {
    width: 17px;
    height: 17px;
    border-radius: 50%;
    flex: none;
    border: 1px solid rgba(0, 0, 0, .35);
}
.light--red {
    background: radial-gradient(circle, #8c1c2c 25%, #e85a5a 60%, #d84048);
}
.light--yellow {
    background: radial-gradient(circle at 50% 70%, #fbd88a, #eda033);
}
.light--green {
    background: radial-gradient(circle at 50% 70%, #b6e38a, #6db842);
}
.docwin__name {
    position: absolute;
    left: 925px;
    top: 4px;
    font-size: 20px;
    line-height: 26px;
    color: #444;
    white-space: nowrap;
}
.docwin__body {
    display: flex;
    flex: 1;
    min-height: 0;
}
.canvas {
    position: relative;
    flex: 1;
    overflow: hidden;
    background: #d5d5d5;
}
.bleed {
    position: absolute;
    left: 669px;
    top: 35px;
    width: 873px;
    height: 1225px;
    border: 2px solid #c8334f;
    border-bottom-color: #77666a;
}
.artboard {
    position: absolute;
    left: 680px;
    top: 46px;
    width: 850px;
    height: 1202px;
    background: #fff;
    border: 2px solid #444;
}
.selection {
    position: absolute;
    left: 1030px;
    top: 573px;
    width: 132px;
    height: 133px;
    border: 2px solid #6d92e2;
    border-bottom-color: #a4a6ae;
}
.handle {
    position: absolute;
    width: 8px;
    height: 8px;
    background: #3d64cc;
}
.handle--tl {
    left: -5px;
    top: -5px;
}
.handle--tr {
    right: -5px;
    top: -5px;
}
.handle--bl {
    left: -5px;
    bottom: -5px;
}
.handle--br {
    right: -5px;
    bottom: -5px;
}
.handle--c {
    left: 60px;
    top: 61px;
}
.vscroll {
    position: relative;
    display: flex;
    flex-direction: column;
    align-items: center;
    justify-content: flex-end;
    width: 23px;
    flex: none;
    padding-bottom: 6px;
    background: #9a9a9a;
}
.vscroll__thumb {
    position: absolute;
    left: 0;
    top: 638px;
    width: 23px;
    height: 22px;
    background: #ececec;
}
.docwin__status {
    display: flex;
    align-items: center;
    height: 24px;
    flex: none;
    font-size: 20px;
    background: #d5d5d5;
    border-top: 2px solid #bdbdbd;
}
.docmode {
    width: 27px;
    height: 16px;
    margin-left: 11px;
    flex: none;
}
.zoomfield {
    display: flex;
    width: 85px;
    height: 24px;
    margin-left: 14px;
    flex: none;
    background: #fff;
    border-left: 2px solid #8c8c8c;
    overflow: hidden;
}
.zoomfield__value {
    flex: 1;
    padding-left: 3px;
    line-height: 34px;
}
.zoomfield--page {
    margin-left: 0;
}
.zoomfield--page .zoomfield__value {
    padding-left: 4px;
}
.pager {
    display: flex;
    justify-content: space-between;
    align-items: center;
    flex: none;
    width: 34px;
}
.pager::before,
.pager::after {
    content: "";
    width: 3px;
    height: 14px;
    background: #aaa;
}
.pager--prev::after,
.pager--next::before {
    display: none;
}
.pager--prev {
    margin: 0 15px 0 15px;
}
.pager--next {
    margin: 0 9px 0 15px;
}
.docinfo {
    width: 313px;
    height: 22px;
    flex: none;
    text-align: center;
    font-size: 18px;
    line-height: 30px;
    color: #444;
    overflow: hidden;
    border-left: 2px solid #bdbdbd;
}
.docinfo__arrow {
    margin-left: 5px;
    margin-right: 5px;
}
.hscroll {
    position: relative;
    display: flex;
    align-items: center;
    justify-content: space-between;
    flex: 1;
    height: 24px;
    padding: 0 9px;
    background: #9a9a9a;
}
.hscroll__thumb {
    position: absolute;
    left: 754px;
    top: 0;
    width: 24px;
    height: 24px;
    background: #ececec;
}
.resizer {
    width: 23px;
    height: 24px;
    flex: none;
    background: linear-gradient(135deg, #e5e5e5 55%, #aaa);
}

/* tools panel */
.panel-top {
    display: flex;
    align-items: center;
    height: 19px;
    padding: 0 6px;
    background: #7d7d7d;
    color: #ddd;
    font-size: 16px;
    line-height: 16px;
}
.collapse {
    color: #333;
    font-family: "Liberation Sans", sans-serif;
    font-size: 16px;
    line-height: 16px;
}
.grip {
    height: 6px;
    width: 30px;
    margin: 4px auto 0;
    background: repeating-linear-gradient(90deg, #8e8e8e 0 3px, #b5b5b5 3px 5px);
}
.toolbox {
    position: absolute;
    left: 0;
    top: 0;
    width: 108px;
    height: 771px;
    background: #d7d7d7;
    border-right: 2px solid #7a7a7a;
    border-bottom: 2px solid #777;
}
.tools {
    display: grid;
    grid-template-columns: 46px 46px;
    grid-auto-rows: 36px;
    margin: 0 8px;
    padding-bottom: 1px;
    border-bottom: 2px solid #b2b2b2;
}
.toolbox .grip + .tools {
    margin-top: 14px;
}
.tool {
    position: relative;
    display: flex;
    align-items: center;
    justify-content: center;
}
.tool svg {
    width: 28px;
    height: 28px;
}
.tool--type {
    font-family: "Liberation Serif", serif;
    font-size: 33px;
    color: #444;
}
.tool--active {
    height: 33px;
    margin: 1px 3px 0 2px;
    background: #8e8e8e;
    border: 1px solid #6f6f6f;
}
.tool--more::after {
    content: "";
    position: absolute;
    right: 4px;
    bottom: 3px;
    border-style: solid;
    border-width: 0 0 5px 5px;
    border-color: transparent transparent #222;
}
.colors {
    position: relative;
    height: 91px;
    margin-top: 6px;
}
.colors__fill {
    position: absolute;
    left: 10px;
    top: 0;
    width: 53px;
    height: 54px;
    background: #fff;
    border: 2px solid #888;
}
.colors__stroke {
    position: absolute;
    left: 36px;
    top: 28px;
    width: 53px;
    height: 53px;
    background: #fff;
    border: 2px solid #888;
}
.colors__stroke svg {
    display: block;
    width: 100%;
    height: 100%;
}
.colors__swap {
    position: absolute;
    left: 74px;
    top: 0;
    width: 18px;
    height: 18px;
}
.colors__reset {
    position: absolute;
    left: 9px;
    top: 62px;
    width: 17px;
    height: 17px;
}
.btnrow {
    display: flex;
    width: 91px;
    height: 29px;
    margin-left: 10px;
    padding: 1px;
    gap: 1px;
    background: #8a8a8a;
}
.btnrow--draw {
    height: 26px;
    margin-top: 9px;
}
.btnrow__btn {
    display: flex;
    align-items: center;
    justify-content: center;
    flex: 1;
    background: #eee;
}
.btnrow__btn--on {
    background: #8f8f8f;
}
.btnrow__btn svg {
    width: 20px;
    height: 20px;
}
.mode-color {
    width: 20px;
    height: 20px;
    background: #fff;
    border: 6px solid #000;
}
.mode-grad {
    width: 20px;
    height: 20px;
    border: 1px solid #333;
    background: linear-gradient(90deg, #222, #eee);
}
.screenmode {
    display: block;
    width: 32px;
    height: 32px;
    margin: 12px 0 0 36px;
}

/* actions panel */
.actions {
    position: absolute;
    left: 404px;
    top: 177px;
    width: 469px;
    height: 491px;
    background: #d6d6d6;
    border: 2px solid #7c7c7c;
    border-top: 0;
    border-radius: 5px 5px 0 0;
    box-shadow: 0 2px 5px rgba(0, 0, 0, .3);
}
.panel-head {
    display: flex;
    justify-content: space-between;
    align-items: center;
    height: 21px;
    padding: 0 6px;
    background: linear-gradient(#8d8d8d, #777);
    border-radius: 5px 5px 0 0;
}
.panel-head__close {
    font-size: 18px;
    line-height: 18px;
    color: #333;
}
.tabs {
    display: flex;
    align-items: stretch;
    height: 25px;
    background: #8e8e8e;
    font-size: 16px;
}
.tab {
    display: flex;
    align-items: center;
    flex: none;
    white-space: nowrap;
    color: #444;
}
.tab--on {
    background: #d6d6d6;
}
.tab--actions {
    width: 99px;
    justify-content: center;
    font-size: 17px;
}
.panel-menu {
    display: flex;
    align-items: center;
    gap: 1px;
    margin-left: auto;
    padding-right: 5px;
}
.panel-menu i {
    width: 11px;
    height: 11px;
    background: #333;
}
.actions__list {
    height: 395px;
    margin: 9px 7px 0;
    background: #d5d5d5;
    border: 2px solid #7d7d7d;
}
.row {
    display: flex;
    height: 28.4px;
    font-size: 18px;
    line-height: 28px;
    border-bottom: 2px solid #a5a5a5;
}
.row--blue {
    background: #bdd1ef;
    color: #1c2a4a;
}
.row--step {
    background: #c5c5c5;
}
.row__check {
    width: 31px;
    flex: none;
    text-align: center;
    font-family: "DejaVu Sans", sans-serif;
    font-size: 17px;
    border-right: 2px solid #a0a0a0;
}
.row__dialog {
    width: 31px;
    flex: none;
    border-right: 2px solid #a0a0a0;
}
.row__body {
    position: relative;
    flex: 1;
    white-space: nowrap;
}
.row__tri {
    position: absolute;
    top: 10px;
    border-width: 8px 6px 0;
}
.row__folder {
    position: absolute;
    left: 30px;
    top: 1px;
    width: 23px;
    height: 23px;
}
.row__body--set {
    padding-left: 60px;
}
.row__body--set .row__tri {
    left: 7px;
}
.row__body--action {
    padding-left: 60px;
}
.row__body--action .row__tri {
    left: 37px;
}
.row__body--step {
    padding-left: 98px;
}
.row__body--step .row__tri {
    left: 67px;
}
.row__body--leaf {
    padding-left: 158px;
}
.row__arrow {
    position: absolute;
    left: 126px;
    top: 0;
    font-size: 16px;
}
.row__body--apply {
    padding-left: 128px;
}
.actions__foot {
    display: flex;
    align-items: center;
    height: 30px;
    padding-left: 213px;
    border-bottom: 2px solid #7c7c7c;
    position: relative;
}
.foot-stop {
    width: 14px;
    height: 14px;
    background: #aaa;
}
.foot-rec {
    width: 15px;
    height: 15px;
    margin-left: 24px;
    border-radius: 50%;
    background: #4a4a4a;
}
.foot-play {
    display: flex;
    align-items: center;
    justify-content: center;
    width: 38px;
    height: 30px;
    margin-left: 13px;
    background: #fff;
    border: 2px solid #777;
    border-width: 0 2px;
}
.foot-icon {
    width: 20px;
    height: 20px;
    margin-left: 19px;
}
.foot-icon--first {
    margin-left: 12px;
}
.grip--foot {
    margin-top: 2px;
}
.tooltip {
    position: absolute;
    left: 700px;
    top: 669px;
    width: 147px;
    height: 33px;
    font-size: 18px;
    line-height: 28px;
    text-align: center;
    color: #333;
    background: #fbf5c0;
    box-shadow: 0 2px 5px rgba(0, 0, 0, .35);
}
.cursor {
    position: absolute;
    left: 699px;
    top: 634px;
    width: 20px;
    height: 27px;
}

/* color panel */
.colorpanel {
    position: absolute;
    left: 1979px;
    top: 15px;
    width: 364px;
    height: 141px;
    background: #d6d6d6;
    border: 2px solid #777;
    border-top: 5px solid #5f5f5f;
    box-shadow: 0 2px 5px rgba(0, 0, 0, .3);
}
.tabs--color {
    height: 26px;
    font-size: 17px;
}
.tab--color {
    width: 80px;
    padding-left: 8px;
}
.updown {
    display: flex;
    flex-direction: column;
    gap: 2px;
    margin-right: 3px;
}
.tab--guide {
    width: 119px;
    justify-content: center;
    color: #555;
    border-right: 2px solid #777;
}
.tab--kuler {
    width: 60px;
    justify-content: center;
    color: #555;
    border-right: 2px solid #777;
}
.tabs__more {
    display: flex;
    align-items: center;
    margin-left: 37px;
    gap: 1px;
}
.tabs__more .tri {
    border-width: 6px 0 6px 7px;
}
.panel-menu--color {
    padding-right: 6px;
    border-left: 0;
}
.colorpanel__body {
    height: 96px;
    padding: 13px 0 0 9px;
    border-bottom: 2px solid #8a8a8a;
}
.chips {
    display: flex;
    width: 60px;
    height: 23px;
    border: 2px solid #888;
}
.chip {
    flex: 1;
    background: #fff;
    overflow: hidden;
}
.chip svg {
    display: block;
    width: 100%;
    height: 100%;
}
.chip--black {
    background: #000;
}
.spectrum {
    width: 324px;
    height: 37px;
    margin: 13px 0 0 1px;
    border: 1px solid #777;
    background:
        linear-gradient(rgba(255,255,255,.95), rgba(255,255,255,0) 35%, rgba(0,0,0,0) 50%, #000),
        linear-gradient(90deg, #e3001c, #dd1a20 5%, #e8a030 11%, #e8e030 15%, #a0c830 25%, #3fb42b 38%, #2aa87a 47%, #35b6dd 54%, #1c47a8 66%, #2a2a90 75%, #8a1a92 85%, #e2005e 94%, #e3001c);
}

/* right hand dock */
.paneldock {
    position: absolute;
    left: 2343px;
    top: 0;
    width: 57px;
    background: #d7d7d7;
}
.paneldock .panel-top {
    justify-content: flex-end;
}
.dockgroup {
    display: flex;
    flex-direction: column;
    align-items: center;
    border-bottom: 2px solid #868686;
    border-left: 2px solid #868686;
    position: relative;
}
.dockgroup--first {
    height: 143px;
}
.dockgroup--tri {
    height: 146px;
}
.dockgroup--duo {
    height: 104px;
}
.dockicon {
    display: flex;
    align-items: center;
    justify-content: center;
    width: 44px;
    height: 36px;
    margin-top: 3px;
}
.dockicon svg {
    width: 30px;
    height: 30px;
}
.dockicon--on {
    margin-top: 6px;
    background: #949494;
    border: 1px solid #7b7b7b;
    border-radius: 3px;
}
.dockicon--guide {
    margin-top: 10px;
}
.dockicon--kuler {
    margin-top: 4px;
}
.dockgroup--tri .dockicon:nth-child(n+3),
.dockgroup--duo .dockicon:nth-child(n+3) {
    margin-top: 7px;
}
```
